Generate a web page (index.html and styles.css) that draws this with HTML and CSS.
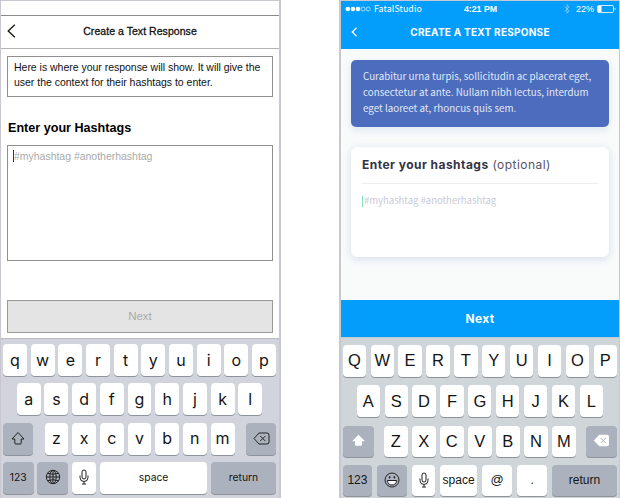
FILE: index.html
```html
<!DOCTYPE html>
<html lang="en">
<head>
<meta charset="utf-8">
<title>Create a Text Response</title>
<link rel="stylesheet" href="styles.css">
</head>
<body>
<main class="stage">
  <section class="phone wire">
    <div class="wire-status"></div>
    <header class="wire-header">
      <svg class="wire-back" viewBox="0 0 9 14"><path d="M7.800 .7 1.200 7l6.600 6.300"/></svg>
      <h1>Create a Text Response</h1>
    </header>
    <div class="wire-body">
      <p class="wire-context">Here is where your response will show. It will give the<br>user the context for their hashtags to enter.</p>
      <h2>Enter your Hashtags</h2>
      <div class="wire-input"><i class="caret"></i><span>#myhashtag #anotherhashtag</span></div>
      <div class="wire-next"><span>Next</span></div>
    </div>
    <div class="keyboard">
      <div class="row"><b>q</b><b>w</b><b>e</b><b>r</b><b>t</b><b>y</b><b>u</b><b>i</b><b>o</b><b>p</b></div>
      <div class="row mid"><b>a</b><b>s</b><b>d</b><b>f</b><b>g</b><b>h</b><b>j</b><b>k</b><b>l</b></div>
      <div class="row third">
        <b class="dark"><svg width="16" height="15" viewBox="0 0 16 15"><path d="M8 1.500 14 8h-2.800v4.200q0 .8-.8.8H5.600q-.8 0-.8-.8V8H2z"/></svg></b>
        <div class="letters"><b>z</b><b>x</b><b>c</b><b>v</b><b>b</b><b>n</b><b>m</b></div>
        <b class="dark"><svg width="17" height="13" viewBox="0 0 17 13"><path d="M6 1h8q2 0 2 2v7q0 2-2 2H6L1 6.500zM7.300 4l5 5m0-5-5 5"/></svg></b>
      </div>
      <div class="row last">
        <b class="dark">123</b>
        <b class="dark"><svg width="16" height="16" viewBox="0 0 16 16"><circle cx="8" cy="8" r="6.700"/><ellipse cx="8" cy="8" rx="3.200" ry="6.700"/><path d="M8 1.300v13.400M1.300 8h13.400M2.600 4.300q5.400 2 10.800 0M2.600 11.700q5.400-2 10.800 0"/></svg></b>
        <b><svg width="10" height="16" viewBox="0 0 10 16"><rect x="3" y="1" width="4" height="9" rx="2"/><path d="M1 6.500v2a4 4 0 0 0 8 0v-2M5 12.500V15M3 15h4"/></svg></b>
        <b>space</b>
        <b class="dark">return</b>
      </div>
    </div>
  </section>

  <section class="phone app">
    <header class="app-header">
      <div class="app-status">
        <div class="carrier"><svg width="26" height="6" viewBox="0 0 26 6"><g fill="#fff"><circle cx="2.800" cy="3" r="2.300"/><circle cx="7.900" cy="3" r="2.300"/><circle cx="13" cy="3" r="2.300"/></g><g fill="none" stroke="#fff" stroke-width=".6"><circle cx="18.100" cy="3" r="2"/><circle cx="23.200" cy="3" r="2"/></g></svg><span>FatalStudio</span></div>
        <div class="clock">4:21 PM</div>
        <div class="power"><svg class="bt" width="6" height="10" viewBox="0 0 6 10"><path d="m.6 2.500 4.600 4.600L3 9.300V.7l2.200 2.200L.6 7.500"/></svg><span>22%</span><svg width="19" height="8" viewBox="0 0 19 8"><rect x=".5" y=".5" width="16" height="7" rx="1.200" fill="none" stroke="#fff" stroke-width=".8"/><rect x="1" y="1" width="3.500" height="6" fill="#fff"/><path d="M17.600 2.700v2.600q1-.4 1-1.300t-1-1.300" fill="#fff"/></svg></div>
      </div>
      <div class="app-title">
        <svg viewBox="0 0 7 10"><path d="M5.500.8 1.300 5l4.200 4.200"/></svg>
        <h1>CREATE A TEXT RESPONSE</h1>
      </div>
    </header>
    <div class="app-body">
      <p class="app-context">Curabitur urna turpis, sollicitudin ac placerat eget,<br>consectetur at ante. Nullam nibh lectus, interdum<br>eget laoreet at, rhoncus quis sem.</p>
      <div class="app-card">
        <h2><strong>Enter your hashtags</strong> <span>(optional)</span></h2>
        <div class="app-input"><i class="caret"></i><span>#myhashtag #anotherhashtag</span></div>
      </div>
    </div>
    <div class="app-next">Next</div>
    <div class="keyboard">
      <div class="row"><b>Q</b><b>W</b><b>E</b><b>R</b><b>T</b><b>Y</b><b>U</b><b>I</b><b>O</b><b>P</b></div>
      <div class="row mid"><b>A</b><b>S</b><b>D</b><b>F</b><b>G</b><b>H</b><b>J</b><b>K</b><b>L</b></div>
      <div class="row third">
        <b class="dark"><svg class="solid" width="15" height="13" viewBox="0 0 15 13"><path d="M7.500.8 14 7.200h-3v3.600q0 1-1 1H5q-1 0-1-1V7.200H1z"/></svg></b>
        <div class="letters"><b>Z</b><b>X</b><b>C</b><b>V</b><b>B</b><b>N</b><b>M</b></div>
        <b class="dark"><svg class="solid" width="17" height="13" viewBox="0 0 17 13"><path d="M6.300.7H14q2 0 2 2v7.600q0 2-2 2H6.300L.8 6.500z"/><path class="cross" d="m7.700 4 5 5m0-5-5 5"/></svg></b>
      </div>
      <div class="row last">
        <b class="dark">123</b>
        <b class="dark"><svg width="16" height="16" viewBox="0 0 16 16"><circle cx="8" cy="8" r="7"/><path d="M3.300 8.500h9.400Q12 13 8 13T3.300 8.500z" fill="#fff"/><ellipse class="eye" cx="5.600" cy="5.300" rx=".8" ry="1.300"/><ellipse class="eye" cx="10.400" cy="5.300" rx=".8" ry="1.300"/></svg></b>
        <b><svg width="10" height="16" viewBox="0 0 10 16"><rect x="3" y="1" width="4" height="9" rx="2"/><path d="M1 6.500v2a4 4 0 0 0 8 0v-2M5 12.500V15M3 15h4"/></svg></b>
        <b>space</b>
        <b class="at">@</b>
        <b>.</b>
        <b class="dark">return</b>
      </div>
    </div>
  </section>
</main>
</body>
</html>
```
FILE: styles.css
```css
* { box-sizing: border-box; }
body { margin: 0; background: #fff; font-family: "Liberation Sans", Arial, sans-serif; }
h1, h2, p { margin: 0; }
.stage { width: 620px; height: 498px; display: flex; justify-content: space-between; overflow: hidden; }
.phone { height: 498px; display: flex; flex-direction: column; border: solid #c9c8d0; overflow: hidden; }
.caret { display: block; flex: none; }

/* Wireframe */
.wire { width: 281px; border-width: 1px 2px 0 1px; background: #fff; color: #111; }
.wire-status { height: 15px; border-bottom: 1px solid #8b8b8b; }
.wire-header { height: 33px; border-bottom: 1px solid #b4b4b4; display: grid; grid-template-columns: 20px 1fr 20px; align-items: center; padding: 0 0 2px; }
.wire-back { width: 9px; height: 14px; margin-left: 6px; fill: none; stroke: #111; stroke-width: 1.3; }
.wire-header h1 { text-align: center; font-size: 10.5px; line-height: 14px; font-weight: 400; letter-spacing: .05px; -webkit-text-stroke: .3px #111; }
.wire-body { height: 289px; padding: 7px 6px 0 6px; display: flex; flex-direction: column; }
.wire-context { height: 41px; border: 1px solid #909090; padding: 3px 6px; font-size: 10.5px; line-height: 15px; letter-spacing: -.02px; white-space: nowrap; }
.wire h2 { height: 48px; padding: 24px 0 0 1px; font-size: 12.6px; line-height: 15px; color: #000; }
.wire-input { height: 116px; border: 1px solid #909090; padding: 4px 5px; display: flex; font-size: 10.5px; line-height: 13px; letter-spacing: -.02px; color: #aaa; }
.wire-input .caret { width: 1px; height: 12px; background: #333; }
.wire-next { height: 33px; margin-top: 39px; border: 1px solid #999; background: #e4e4e4; color: #aaa; display: flex; align-items: center; justify-content: center; font-size: 11.5px; padding-bottom: 1px; }

/* App */
.app { width: 281px; border-width: 1px 1px 0 2px; background: #f9fbfb; }
.app-header { height: 48px; background: #039dfc; color: #fff; }
.app-status { height: 15px; display: grid; grid-template-columns: 1fr auto 1fr; align-items: center; padding: 0 3px 0 4px; font-size: 10px; line-height: 12px; }
.carrier, .power { display: flex; align-items: center; gap: 3px; }
.carrier { font-family: "Noto Sans CJK SC", "Noto Sans", sans-serif; font-size: 8.8px; letter-spacing: .1px; }
.power { justify-content: flex-end; }
.power span { font-size: 9px; }
.clock { font-weight: 700; font-size: 8.8px; }
.bt { fill: none; stroke: #9fd9ff; stroke-width: .7; margin-right: 3px; }
.app-title { height: 33px; display: grid; grid-template-columns: 20px 1fr 20px; align-items: center; }
.app-title svg { width: 7px; height: 10px; margin: 0 0 2px 10px; fill: none; stroke: #fff; stroke-width: 1.3; }
.app-title h1 { font: 700 10px/14px Inter, sans-serif; text-align: center; letter-spacing: .25px; white-space: nowrap; padding-bottom: 1px; }
.app-body { height: 251px; padding: 11px 10px 0 10px; }
.app-context { height: 67px; border-radius: 5px; background: #4c6dbd; color: #e1e7f7; padding: 8px 11px 8px 12px; font: 9.8px/16px "Noto Sans CJK SC", "Noto Sans", sans-serif; white-space: nowrap; box-shadow: 0 3px 8px #4c6dbd26; }
.app-card { height: 110px; margin-top: 20px; border-radius: 6px; background: #fff; box-shadow: 0 2px 8px #5373b938; padding: 0 11px; }
.app-card h2 { height: 37px; border-bottom: 1px solid #eaebf5; padding-top: 9px; font: 400 12px/17px Inter, sans-serif; letter-spacing: .46px; color: #555563; white-space: nowrap; }
.app-card strong { color: #333343; font-weight: 700; }
.app-input { padding-top: 10px; display: flex; font: 9.5px/13px "Noto Sans CJK SC", "Noto Sans", sans-serif; color: #c9cbd7; white-space: nowrap; }
.app-input .caret { width: 1px; height: 11px; margin: 2px 1px 0 0; background: #86e1bd; }
.app-next { height: 37px; background: #039dfc; color: #fff; display: flex; align-items: center; justify-content: center; font: 700 12px/15px Inter, sans-serif; letter-spacing: .3px; padding-bottom: 1px; }

/* Keyboards */
.keyboard { flex: 1; display: flex; flex-direction: column; background: #d1d4dc; font-family: Inter, sans-serif; color: #151515; }
.wire .keyboard { padding: 5px 3px 0 2px; gap: 7.300px; border-top: 1px solid #b9bcc8; }
.keyboard b { height: 32px; border-radius: 4px; background: #fff; box-shadow: 0 1px 0 #8f939b; display: flex; align-items: center; justify-content: center; font-weight: 400; font-size: 16px; line-height: 20px; padding-bottom: 1px; min-width: 0; }
.keyboard .dark { background: #abb2bd; }
.keyboard svg { fill: none; stroke: #222; stroke-width: 1; flex: none; }
.row { display: grid; grid-template-columns: repeat(10, 1fr); column-gap: 3.700px; }
.row.mid { grid-template-columns: repeat(9, 1fr); padding: 0 13.800px; }
.row.third { grid-template-columns: 30px 190px 30px; justify-content: space-between; column-gap: 0; }
.letters { display: grid; grid-template-columns: repeat(7, 1fr); column-gap: 3.700px; }
.row.last { grid-template-columns: 30.500px 31px 24px 107px 65px; justify-content: space-between; column-gap: 0; }
.wire .last b { font-size: 10.3px; }
.app .keyboard { padding: 7px 2px 0 1.700px; gap: 8.800px; border-top: 1px solid #bccbd5; background: #d0d5d9; font-family: "Liberation Sans", Arial, sans-serif; }
.app .keyboard b { height: 31.500px; font-size: 16.5px; padding-bottom: 1px; }
.app .row, .app .letters { column-gap: 4.600px; }
.app .row.mid { padding: 0 14px; }
.app .row.third { grid-template-columns: 31px 191.500px 31px; column-gap: 0; }
.app .row.last { grid-template-columns: 29.500px 30.500px 23.500px 37.500px 30.500px 30.500px 65px; column-gap: 0; margin-top: -1px; }
.app .keyboard .last b { font-size: 12px; }
.app .keyboard .last .at { font-size: 13px; }
.app .keyboard svg.solid { fill: #fff; stroke: none; }
.app .keyboard .cross { stroke: #abb2bd; stroke-width: 1; }
.app .keyboard .eye { fill: #222; stroke: none; }
```
